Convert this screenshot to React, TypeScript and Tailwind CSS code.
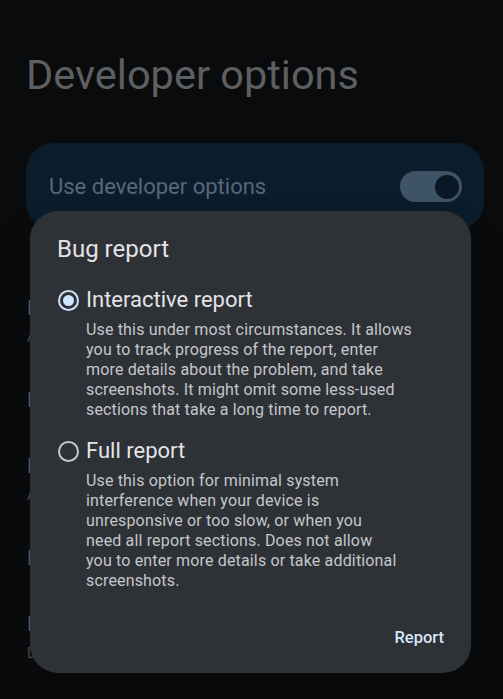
import React from "react";

const font = { fontFamily: "Roboto, 'Noto Sans', sans-serif" };

const bgItems = [
  { title: "Bug report", sub: "Android System" },
  { title: "Bug report handler" },
  { title: "Backup password", sub: "Always on" },
  { title: "Bluetooth HCI snoop log" },
  { title: "Picture color mode", sub: "Default" },
];

function Radio({ checked }: { checked: boolean }) {
  return (
    <span className="flex w-[26px] h-[26px] items-center justify-center">
      <span
        className={
          checked
            ? "flex h-[21px] w-[21px] items-center justify-center rounded-full border-[2.5px] border-[#cfe2f8]"
            : "flex h-[21px] w-[21px] items-center justify-center rounded-full border-[2px] border-[#c4c7cb]"
        }
      >
        {checked && <span className="h-[11px] w-[11px] rounded-full bg-[#cfe4ff]" />}
      </span>
    </span>
  );
}

function Option({
  checked,
  label,
  lines,
  className,
}: {
  checked: boolean;
  label: string;
  lines: string[];
  className: string;
}) {
  return (
    <div className={className}>
      <div className="flex items-center gap-[5px]">
        <Radio checked={checked} />
        <span className="text-[22px] leading-[28px] text-[#e3e3e6]">{label}</span>
      </div>
      <p className="mt-[6px] pl-[31px] text-[16px] leading-[20px] tracking-[0.01em] text-[#c4c7cb]">
        {lines.map((l, i) => (
          <React.Fragment key={i}>
            {l}
            {i < lines.length - 1 && <br />}
          </React.Fragment>
        ))}
      </p>
    </div>
  );
}

export default function App() {
  return (
    <div className="relative h-[699px] w-full overflow-hidden bg-[#0a0b0d]" style={font}>
      <div className="pt-[51px]">
        <h1 className="pl-[26px] text-[41.5px] leading-[48px] text-[#5e5f61]">Developer options</h1>

        <div className="ml-[26px] mr-[19px] mt-[44px] flex h-[87px] items-center justify-between rounded-[28px] bg-[#0b1d2b] pl-[23px] pr-[22px]">
          <span className="text-[22px] text-[#56687a]">Use developer options</span>
          <span className="flex h-[31px] w-[62px] items-center justify-end rounded-full bg-[#3f5366] pr-[3px]">
            <span className="h-[24px] w-[24px] rounded-full bg-[#0a1826]" />
          </span>
        </div>

        <ul className="mt-[45px] px-[27px]">
          {bgItems.map((it) => (
            <li key={it.title} className="py-[20px]">
              <div className="text-[20px] leading-[26px] text-[#5e5f61]">{it.title}</div>
              {it.sub && <div className="mt-[6px] text-[14px] leading-[20px] text-[#4a4b4d]">{it.sub}</div>}
            </li>
          ))}
        </ul>
      </div>

      <div className="absolute left-[30px] top-[211px] flex h-[462px] w-[441px] flex-col rounded-[28px] bg-[#2e3136] shadow-2xl">
        <div className="px-[27px] pt-[24px]">
          <h2 className="text-[24px] leading-[28px] text-[#e3e3e6]">Bug report</h2>
          <Option
            className="mt-[23px] -ml-[2px]"
            checked
            label="Interactive report"
            lines={[
              "Use this under most circumstances. It allows",
              "you to track progress of the report, enter",
              "more details about the problem, and take",
              "screenshots. It might omit some less-used",
              "sections that take a long time to report.",
            ]}
          />
          <Option
            className="mt-[17px] -ml-[2px]"
            checked={false}
            label="Full report"
            lines={[
              "Use this option for minimal system",
              "interference when your device is",
              "unresponsive or too slow, or when you",
              "need all report sections. Does not allow",
              "you to enter more details or take additional",
              "screenshots.",
            ]}
          />
        </div>
        <div className="mt-auto flex justify-end px-[15px] pb-[15px]">
          <button className="h-[40px] rounded-full px-[12px] text-[16.5px] font-medium text-[#d6e6f8]">Report</button>
        </div>
      </div>
    </div>
  );
}
